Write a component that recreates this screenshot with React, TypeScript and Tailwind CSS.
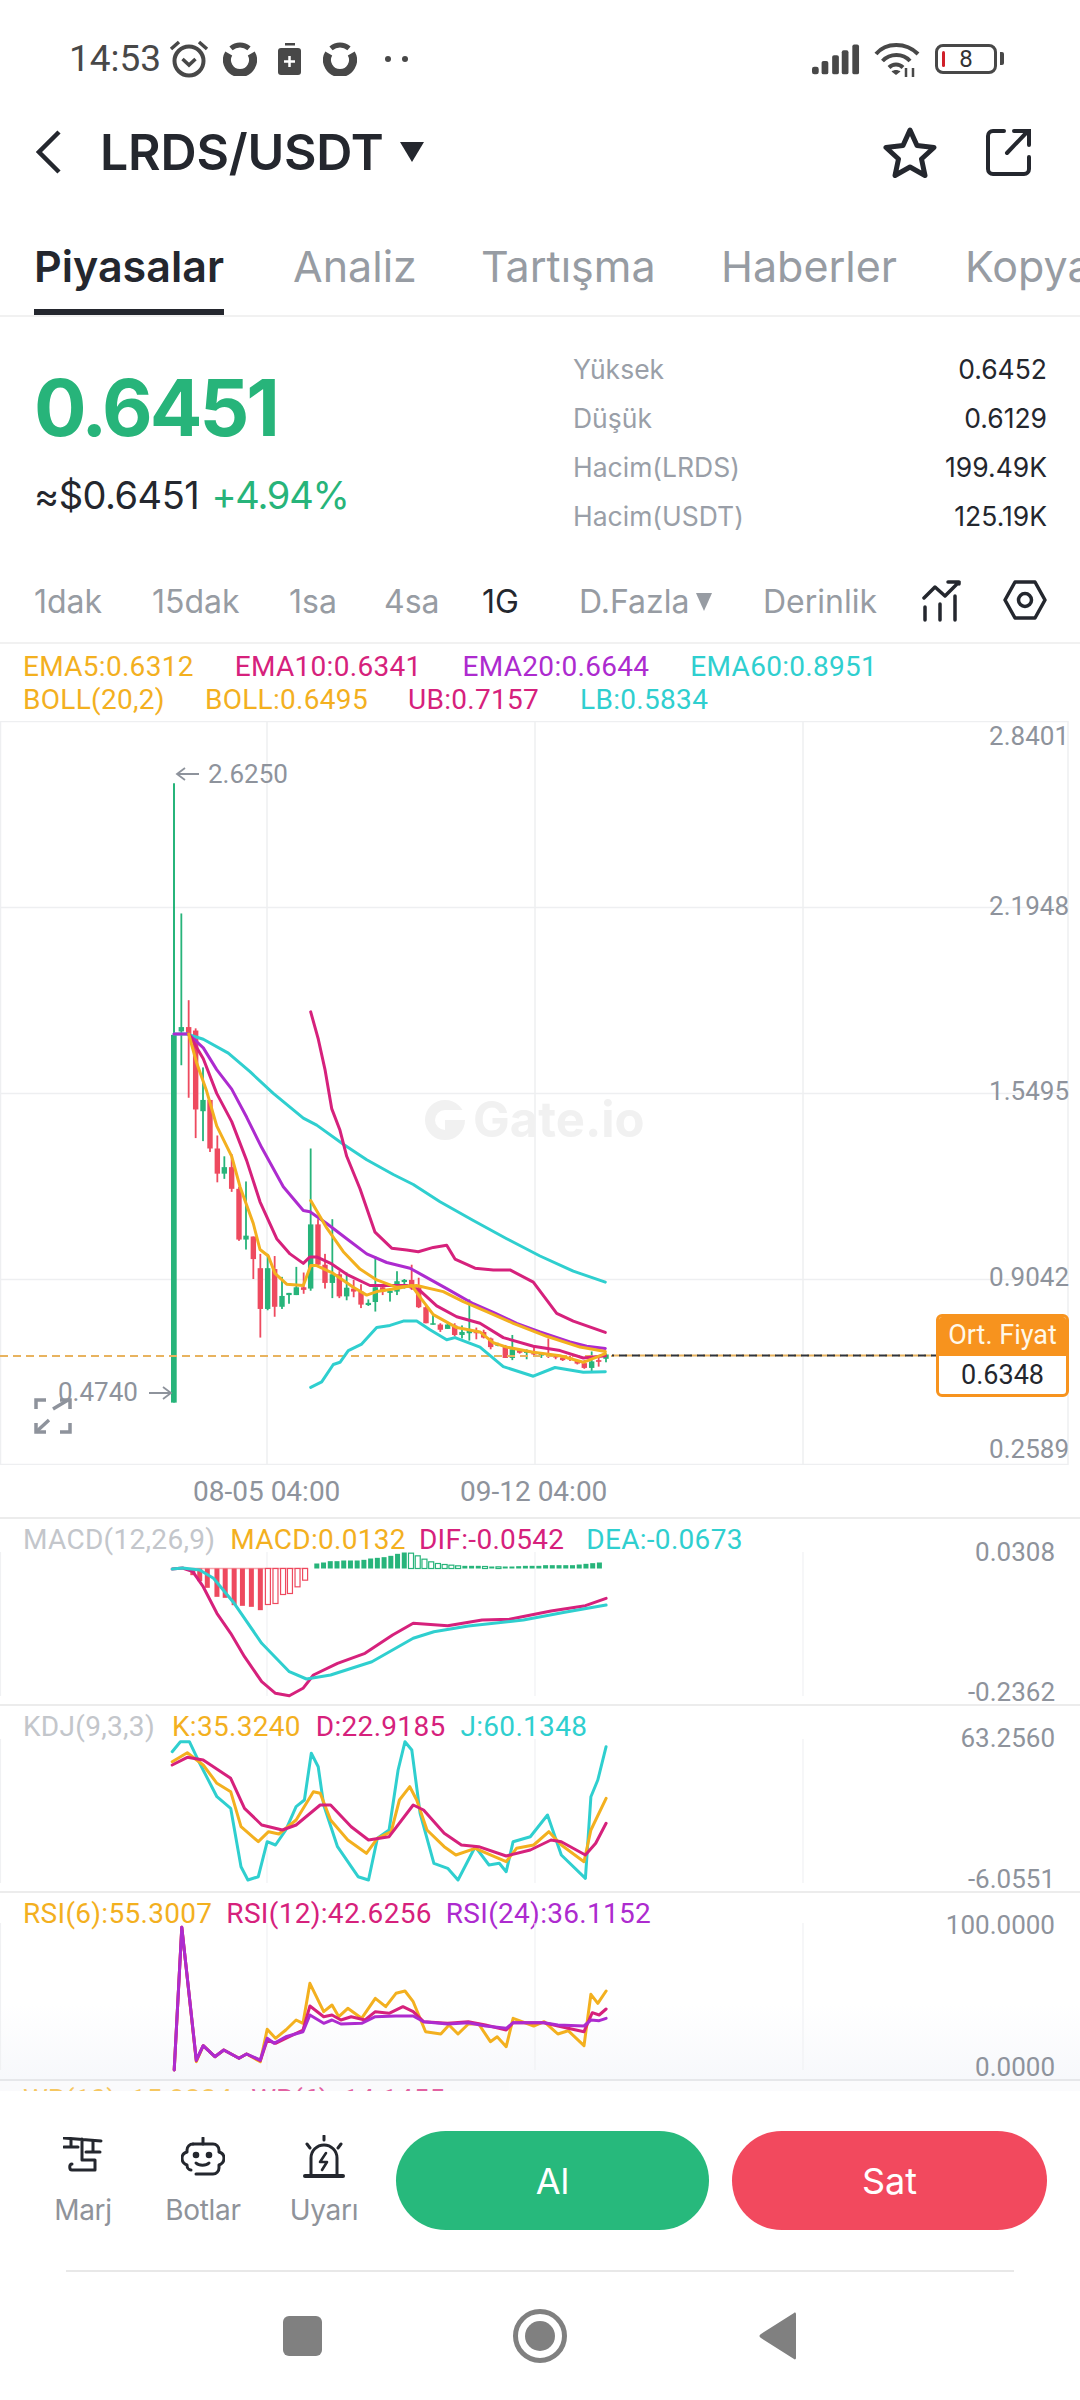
import React from 'react';

type Pt = [number, number];

const GREEN = '#27b47a';
const RED = '#ee4a5f';
const ORANGE = '#f3b01f';
const PINK = '#d6217c';
const PURPLE = '#ad2bcf';
const TEAL = '#2fcfcf';

// chart data was read off the reference, main chart uses x / 3 and y / 2.306 units
const mainX = (x: number) => 140 + x / 3;
const mainY = (y: number) => 19 + y / 2.306;
const toMain = (pts: Pt[]) => pts.map(([x, y]) => `${mainX(x).toFixed(1)},${mainY(y).toFixed(1)}`).join(' ');

const candles: [number, number, number, number, number, 'g' | 'r'][] = [
  [124, 400, 750, 662, 672, 'g'], [146, 600, 825, 662, 680, 'r'], [167, 665, 918, 670, 852, 'r'],
  [189, 755, 925, 830, 856, 'g'], [210, 830, 950, 830, 942, 'r'], [232, 912, 1020, 942, 1000, 'r'],
  [253, 960, 1012, 985, 1000, 'g'], [275, 955, 1042, 985, 1035, 'r'], [297, 1030, 1155, 1035, 1152, 'r'],
  [318, 1018, 1175, 1143, 1152, 'g'], [340, 1145, 1243, 1145, 1197, 'r'], [361, 1185, 1378, 1218, 1312, 'r'],
  [383, 1185, 1315, 1218, 1312, 'g'], [404, 1190, 1330, 1220, 1307, 'r'], [426, 1238, 1312, 1282, 1307, 'g'],
  [447, 1275, 1300, 1275, 1280, 'g'], [469, 1215, 1280, 1262, 1280, 'g'], [491, 1228, 1277, 1262, 1268, 'r'],
  [512, 942, 1270, 1117, 1265, 'g'], [534, 1105, 1210, 1117, 1210, 'r'], [555, 1185, 1265, 1210, 1252, 'r'],
  [577, 1105, 1287, 1232, 1252, 'g'], [598, 1225, 1287, 1232, 1283, 'r'], [620, 1228, 1292, 1263, 1283, 'g'],
  [641, 1245, 1285, 1265, 1272, 'r'], [663, 1255, 1310, 1272, 1302, 'r'], [685, 1290, 1305, 1298, 1303, 'g'],
  [706, 1190, 1318, 1262, 1296, 'g'], [728, 1258, 1280, 1262, 1272, 'r'], [750, 1265, 1295, 1270, 1275, 'g'],
  [771, 1225, 1280, 1248, 1272, 'g'], [793, 1243, 1265, 1245, 1250, 'g'], [815, 1210, 1268, 1245, 1262, 'r'],
  [836, 1240, 1310, 1262, 1308, 'r'], [858, 1305, 1345, 1308, 1345, 'r'], [879, 1325, 1348, 1345, 1348, 'g'],
  [901, 1345, 1365, 1348, 1360, 'r'], [923, 1342, 1358, 1348, 1358, 'g'], [944, 1345, 1375, 1350, 1372, 'r'],
  [966, 1350, 1380, 1365, 1372, 'g'], [988, 1290, 1385, 1362, 1368, 'g'], [1009, 1355, 1382, 1362, 1368, 'r'],
  [1031, 1360, 1380, 1365, 1378, 'r'], [1052, 1378, 1405, 1380, 1400, 'r'], [1074, 1390, 1398, 1393, 1397, 'g'],
  [1096, 1395, 1425, 1397, 1425, 'r'], [1117, 1372, 1430, 1405, 1425, 'g'], [1139, 1405, 1415, 1407, 1413, 'r'],
  [1160, 1405, 1428, 1410, 1413, 'g'], [1182, 1400, 1420, 1412, 1417, 'r'], [1204, 1415, 1425, 1416, 1419, 'g'],
  [1225, 1380, 1425, 1415, 1418, 'r'], [1247, 1418, 1428, 1420, 1424, 'r'], [1268, 1422, 1432, 1424, 1430, 'r'],
  [1290, 1420, 1432, 1424, 1428, 'r'], [1312, 1430, 1440, 1432, 1438, 'r'], [1333, 1430, 1450, 1437, 1448, 'r'],
  [1355, 1410, 1455, 1433, 1448, 'g'], [1376, 1425, 1445, 1430, 1434, 'r'], [1398, 1415, 1435, 1417, 1427, 'g'],
];

const ema60: Pt[] = [[102, 678], [140, 678], [190, 690], [265, 722], [330, 765], [400, 815], [490, 872], [530, 888], [610, 932], [680, 968], [760, 1002], [820, 1025], [900, 1065], [1000, 1108], [1100, 1150], [1200, 1190], [1300, 1225], [1396, 1250]];
const ema20: Pt[] = [[102, 678], [145, 678], [190, 710], [230, 760], [275, 805], [320, 870], [365, 940], [430, 1030], [490, 1085], [510, 1088], [560, 1115], [620, 1150], [680, 1185], [740, 1205], [810, 1218], [850, 1235], [920, 1265], [1000, 1300], [1060, 1320], [1130, 1345], [1200, 1365], [1290, 1388], [1340, 1398], [1396, 1403]];
const ema10: Pt[] = [[146, 678], [190, 735], [230, 815], [275, 880], [320, 970], [360, 1065], [410, 1150], [450, 1185], [490, 1207], [510, 1192], [530, 1192], [575, 1208], [620, 1232], [690, 1258], [740, 1258], [800, 1258], [840, 1270], [890, 1305], [950, 1330], [1020, 1345], [1090, 1378], [1180, 1398], [1260, 1408], [1330, 1425], [1396, 1420]];
const ema5: Pt[] = [[146, 678], [170, 745], [200, 810], [230, 890], [275, 960], [300, 1030], [340, 1115], [360, 1175], [385, 1190], [405, 1230], [440, 1255], [490, 1258], [512, 1212], [530, 1212], [580, 1230], [640, 1262], [680, 1280], [710, 1272], [770, 1265], [815, 1258], [845, 1290], [880, 1325], [950, 1355], [1020, 1365], [1060, 1390], [1100, 1400], [1180, 1412], [1260, 1420], [1330, 1435], [1396, 1415]];
const bollMid: Pt[] = [[512, 1062], [560, 1125], [610, 1180], [660, 1220], [710, 1245], [770, 1262], [830, 1258], [910, 1272], [970, 1295], [1040, 1318], [1120, 1345], [1220, 1375], [1320, 1400], [1396, 1410]];
const bollUp: Pt[] = [[512, 627], [535, 690], [555, 760], [575, 850], [600, 900], [620, 960], [660, 1035], [705, 1135], [755, 1172], [800, 1176], [835, 1180], [880, 1170], [920, 1165], [945, 1197], [1005, 1218], [1060, 1222], [1110, 1222], [1180, 1250], [1250, 1322], [1300, 1340], [1396, 1366]];
const bollLow: Pt[] = [[512, 1493], [545, 1480], [580, 1440], [600, 1435], [625, 1408], [665, 1393], [710, 1355], [750, 1350], [790, 1340], [830, 1340], [870, 1360], [920, 1383], [945, 1378], [1020, 1400], [1090, 1445], [1180, 1467], [1245, 1447], [1330, 1458], [1396, 1457]];

// lower panels: x / 1.452, y / 3, then relative to panel top
const HX = 1.452;
const toPanel = (pts: Pt[], offset: number) =>
  pts.map(([x, y]) => `${(x / HX).toFixed(1)},${(y / 3 + offset).toFixed(1)}`).join(' ');

const dif: Pt[] = [[250, 267], [265, 264], [280, 275], [295, 320], [315, 400], [335, 460], [355, 530], [380, 605], [400, 640], [420, 647], [440, 625], [455, 585], [490, 550], [530, 520], [570, 465], [600, 430], [650, 437], [700, 420], [740, 418], [800, 393], [850, 377], [880, 355]];
const dea: Pt[] = [[250, 267], [265, 264], [290, 270], [310, 295], [340, 370], [380, 490], [420, 575], [445, 597], [480, 585], [540, 545], [600, 475], [630, 455], [680, 438], [760, 420], [820, 397], [880, 375]];
const redBars: [number, number, boolean][] = [[280, 20, true], [290, 38, true], [301, 58, true], [315, 85, true], [327, 88, true], [340, 110, true], [352, 112, true], [365, 115, true], [378, 125, true], [389, 108, false], [400, 105, false], [411, 78, false], [421, 75, false], [432, 55, false], [443, 35, false]];
const greenHeights = [15, 18, 22, 22, 24, 24, 24, 26, 30, 32, 34, 38, 44, 48, 46, 38, 28, 20, 15, 12, 10, 8, 8, 8, 8, 6, 6, 5, 6, 6, 7, 8, 8, 8, 10, 10, 10, 10, 10, 12, 14, 16, 18];

const kdjJ: Pt[] = [[250, 815], [262, 785], [275, 785], [290, 850], [315, 950], [335, 985], [350, 1160], [360, 1200], [375, 1190], [388, 1085], [400, 1095], [415, 1050], [430, 980], [442, 960], [452, 820], [462, 860], [470, 975], [490, 1100], [520, 1190], [535, 1200], [548, 1075], [565, 1050], [578, 870], [588, 785], [598, 810], [610, 1000], [630, 1150], [650, 1165], [665, 1200], [690, 1100], [710, 1155], [725, 1150], [735, 1175], [745, 1085], [770, 1070], [795, 1005], [815, 1125], [850, 1195], [858, 950], [868, 900], [880, 800]];
const kdjK: Pt[] = [[250, 845], [272, 818], [295, 855], [315, 910], [335, 935], [350, 1040], [375, 1085], [390, 1055], [405, 1062], [430, 1020], [455, 935], [465, 940], [480, 1020], [505, 1080], [532, 1120], [548, 1075], [568, 1055], [580, 960], [595, 920], [605, 960], [620, 1050], [645, 1100], [662, 1125], [690, 1105], [735, 1145], [750, 1105], [775, 1095], [797, 1055], [815, 1095], [848, 1145], [858, 1050], [880, 955]];
const kdjD: Pt[] = [[250, 855], [272, 832], [295, 840], [335, 895], [355, 985], [380, 1035], [410, 1050], [430, 1035], [465, 975], [480, 975], [510, 1040], [535, 1080], [565, 1070], [600, 975], [615, 990], [645, 1060], [670, 1095], [695, 1100], [735, 1128], [770, 1110], [800, 1080], [815, 1085], [850, 1125], [865, 1090], [880, 1030]];

const rsi24: Pt[] = [[253, 570], [264, 142], [285, 540], [295, 497], [312, 530], [325, 510], [347, 535], [358, 522], [378, 540], [388, 475], [398, 490], [415, 470], [440, 455], [450, 405], [470, 430], [482, 420], [495, 432], [525, 430], [545, 410], [575, 408], [600, 408], [615, 425], [650, 432], [680, 428], [705, 438], [735, 445], [745, 428], [790, 428], [810, 435], [848, 438], [858, 420], [870, 422], [880, 415]];
const rsi12: Pt[] = [[253, 570], [264, 142], [285, 542], [295, 497], [312, 530], [325, 510], [347, 535], [358, 522], [378, 542], [388, 480], [400, 490], [440, 450], [450, 378], [470, 410], [482, 405], [495, 420], [510, 410], [530, 420], [545, 395], [565, 400], [585, 380], [600, 395], [615, 425], [650, 430], [680, 425], [705, 435], [735, 450], [745, 428], [790, 428], [810, 438], [848, 455], [860, 398], [870, 405], [880, 387]];
const rsi6: Pt[] = [[253, 570], [264, 142], [285, 545], [295, 497], [312, 530], [325, 510], [347, 535], [358, 522], [378, 545], [388, 448], [400, 475], [415, 450], [430, 420], [440, 430], [450, 310], [470, 395], [482, 375], [492, 410], [505, 385], [525, 415], [545, 355], [560, 380], [575, 340], [588, 333], [600, 365], [618, 455], [640, 462], [652, 435], [665, 462], [680, 432], [695, 432], [712, 485], [722, 470], [735, 500], [745, 415], [775, 438], [790, 425], [810, 462], [825, 452], [848, 497], [858, 343], [868, 370], [880, 333]];

const Line = ({ points, color, width = 3 }: { points: string; color: string; width?: number }) => (
  <polyline points={points} fill="none" stroke={color} strokeWidth={width} strokeLinejoin="round" strokeLinecap="round" />
);

const RingIcon = () => (
  <svg width="34" height="34" viewBox="0 0 34 34" fill="none" stroke="#484848">
    <path d="M5.740 11.500A13 13 0 1 0 28.260 11.500" strokeWidth="8" />
    <path d="M8 6.300A14 14 0 0 1 26 6.300" strokeWidth="5" />
  </svg>
);

const StatusBar = () => (
  <div className="h-[117px] pl-[69px] pr-[76px] flex items-center justify-between text-[#484848]">
    <div className="flex items-center">
      <span className="text-[37px] leading-none w-[98px] font-['Roboto',sans-serif]">14:53</span>
      <svg width="44" height="40" viewBox="0 0 44 40" fill="none" stroke="#484848">
        <circle cx="22" cy="22" r="14.500" strokeWidth="4" />
        <path d="M15.500 20l6.500 6 6.500-6" strokeWidth="3.500" />
        <path d="M4 10l8-7M40 10l-8-7" strokeWidth="3.500" />
      </svg>
      <div className="ml-[12px]"><RingIcon /></div>
      <svg className="ml-[21px]" width="24" height="32" viewBox="0 0 24 32">
        <rect x="7" y="0" width="10" height="2.500" fill="#484848" />
        <rect x="0" y="5" width="23" height="27" rx="3" fill="#484848" />
        <path d="M11.500 13v11M6 18.500h11" stroke="#fff" strokeWidth="2.500" />
      </svg>
      <div className="ml-[21px]"><RingIcon /></div>
      <div className="ml-[28px] flex gap-[11px]">
        <span className="w-[6px] h-[6px] rounded-full bg-[#484848]" />
        <span className="w-[6px] h-[6px] rounded-full bg-[#484848]" />
      </div>
    </div>
    <div className="flex items-center">
      <svg width="48" height="32" viewBox="0 0 50 32" fill="#484848">
        <rect x="0" y="24" width="7" height="8" rx="2.500" />
        <rect x="10" y="18" width="7" height="14" rx="2" />
        <rect x="21" y="12" width="7" height="20" rx="2" />
        <rect x="31" y="7" width="7" height="25" rx="2" />
        <rect x="42" y="1" width="7" height="31" rx="2" />
      </svg>
      <svg className="ml-[14px]" width="46" height="36" viewBox="0 0 46 36" fill="none" stroke="#484848" strokeWidth="4">
        <path d="M2 13C12 1 32 1 44 13" />
        <path d="M8.500 20C16 12 29 12 36 20" />
        <path d="M15 26.500C19 22.500 25 22.500 29 26.500" />
        <path d="M22 34l-4.500-3.500C20 28.500 24 28.500 26.500 30.500Z" fill="#484848" stroke="none" />
        <path d="M32 27v9M39 27v9" strokeWidth="2.500" />
      </svg>
      <div className="ml-[15px] relative w-[62px] h-[30px] rounded-[8px] border-[3px] border-[#484848] flex items-center justify-center">
        <span className="absolute left-[4px] top-[4px] w-[3px] h-[16px] bg-[#d0202a] rounded-[2px]" />
        <span className="text-[24px] leading-none text-[#333] font-['Roboto',sans-serif]">8</span>
      </div>
      <span className="ml-[3px] w-[4px] h-[13px] bg-[#484848] rounded-r-[2px]" />
    </div>
  </div>
);

const Header = () => (
  <div className="h-[70px] relative flex items-center pl-[36px] pr-[49px]">
    <svg width="26" height="44" viewBox="0 0 26 44" fill="none" stroke="#24272e" strokeWidth="4.500">
      <path d="M23 2L3 22l20 20" />
    </svg>
    <span className="ml-[38px] text-[50px] leading-none font-semibold text-[#24272e] font-['Inter',sans-serif] tracking-[-0.200px]">LRDS/USDT</span>
    <svg className="ml-[16px]" width="24" height="20" viewBox="0 0 24 20"><path d="M0 0h24L12 20Z" fill="#24272e" /></svg>
    <div className="ml-auto flex items-center gap-[48px]">
      <svg width="54" height="52" viewBox="0 0 54 52" fill="none" stroke="#24272e" strokeWidth="5" strokeLinejoin="round">
        <path d="M27 4l7 15.500 17 2-12.500 11.500 3.500 16.500L27 41l-15 8.500 3.500-16.500L3 21.500l17-2Z" />
      </svg>
      <svg width="46" height="48" viewBox="0 0 46 48" fill="none" stroke="#24272e" strokeWidth="4" strokeLinecap="round">
        <path d="M19 3H8a5 5 0 0 0-5 5v33a5 5 0 0 0 5 5h31a5 5 0 0 0 5-5V29" />
        <path d="M22 25L42 4M29 3h15v14" />
      </svg>
    </div>
  </div>
);

const Tabs = () => (
  <div className="h-[130px] pt-[54px] border-b-2 border-[#f1f1f1] overflow-hidden relative">
    <div className="flex text-[43px] leading-[50px] font-['Inter',sans-serif] whitespace-nowrap text-[#979ca3]">
      <div className="ml-[34px] w-[259px] shrink-0 text-[#24272e] font-semibold">Piyasalar</div>
      <div className="w-[188px] shrink-0">Analiz</div>
      <div className="w-[240px] shrink-0">Tartışma</div>
      <div className="w-[244px] shrink-0">Haberler</div>
      <div className="shrink-0">Kopya</div>
    </div>
    <div className="absolute left-[34px] bottom-0 w-[190px] h-[6px] bg-[#24272e]" />
  </div>
);

const stats = [
  ['Yüksek', '0.6452'],
  ['Düşük', '0.6129'],
  ['Hacim(LRDS)', '199.49K'],
  ['Hacim(USDT)', '125.19K'],
];

const PriceBlock = () => (
  <div className="h-[196px] pl-[34px] pr-[33px] flex font-['Inter',sans-serif]">
    <div className="w-[539px]">
      <div className="mt-[44px] text-[78px] leading-[94px] font-bold text-[#27b47a] tracking-[-3px]">0.6451</div>
      <div className="mt-[18px] text-[38px] leading-[44px] text-[#24272e] tracking-[-0.500px]">
        ≈$0.6451 <span className="text-[#27b47a] ml-[2px] tracking-[-1.200px]">+4.94%</span>
      </div>
    </div>
    <div className="flex-1 pt-[28px]">
      {stats.map(([label, value]) => (
        <div key={label} className="h-[49px] flex items-center justify-between text-[26.500px]">
          <span className="text-[#9a9fa8]">{label}</span>
          <span className="text-[#24272e]">{value}</span>
        </div>
      ))}
    </div>
  </div>
);

const TimeRow = () => (
  <div className="h-[131px] border-b-2 border-[#f1f1f1] pl-[34px] pt-[67px] flex text-[32px] leading-[44px] text-[#979ca3] font-['Inter',sans-serif] whitespace-nowrap">
    <div className="w-[118px]">1dak</div>
    <div className="w-[137px]">15dak</div>
    <div className="w-[95px]">1sa</div>
    <div className="w-[98px]">4sa</div>
    <div className="w-[97px] text-[#24272e]">1G</div>
    <div className="w-[184px] h-[44px] flex items-center">
      D.Fazla
      <svg className="ml-[7px]" width="16" height="18" viewBox="0 0 16 18"><path d="M0 0h16L8 18Z" fill="#979ca3" /></svg>
    </div>
    <div className="w-[159px]">Derinlik</div>
    <svg width="40" height="42" viewBox="0 0 40 42" fill="none" stroke="#24272e" strokeWidth="3.500" strokeLinecap="round" strokeLinejoin="round">
      <path d="M2 18l11-11 10 9L37 2M26 2h11v2" />
      <path d="M3 27v13M18 24v16M33 16v24" />
    </svg>
    <svg width="44" height="40" viewBox="0 0 44 40" fill="none" stroke="#24272e" strokeWidth="3.500" strokeLinejoin="round" className="ml-[41px]">
      <path d="M12 2h20l10 18-10 18H12L2 20Z" />
      <circle cx="22" cy="20" r="6.500" />
    </svg>
  </div>
);

const Legend = ({ items, h = 'h-[33px]' }: { items: [string, string, string][]; h?: string }) => (
  <div className={`${h} flex items-center pl-[23px] text-[28px] leading-none tracking-[0.300px] whitespace-nowrap font-['Roboto',sans-serif]`}>
    {items.map(([text, color, ml]) => (
      <span key={text} className={ml} style={{ color }}>{text}</span>
    ))}
  </div>
);

const AxisLabel = ({ top, right = 'right-[11px]', children }: { top: number; right?: string; children: React.ReactNode }) => (
  <span className={`absolute ${right} text-[26px] leading-[26px] text-[#8e939c] font-['Roboto',sans-serif]`} style={{ top: top - 13 }}>
    {children}
  </span>
);

const MainChart = () => (
  <div className="relative h-[798px] border-b-2 border-[#ececec] overflow-hidden">
    <svg width="1080" height="744" className="absolute left-0 top-0">
      {[0, 186, 372, 558, 743].map((y) => <line key={y} x1="0" x2="1068" y1={y + 0.5} y2={y + 0.5} stroke="#eeeff1" strokeWidth="1.500" />)}
      {[0.5, 267, 535, 803, 1068].map((x) => <line key={x} x1={x} x2={x} y1="0" y2="744" stroke="#eeeff1" strokeWidth="1.500" />)}
      <line x1={mainX(102)} x2={mainX(102)} y1={mainY(100)} y2={mainY(1528)} stroke={GREEN} strokeWidth="2" />
      <rect x={mainX(93)} y={mainY(680)} width="5.700" height={(1528 - 680) / 2.306} fill={GREEN} />
      {candles.map(([x, wt, wb, bt, bb, c]) => (
        <g key={x} fill={c === 'g' ? GREEN : RED} stroke="none">
          <rect x={mainX(x) - 0.9} y={mainY(wt)} width="1.800" height={(wb - wt) / 2.306} />
          <rect x={mainX(x) - 2.700} y={mainY(bt)} width="5.400" height={Math.max((bb - bt) / 2.306, 1.500)} />
        </g>
      ))}
      <line x1="0" x2="612" y1="635" y2="635" stroke="#e8b35f" strokeWidth="2" strokeDasharray="8 5" />
      <line x1="612" x2="936" y1="634.500" y2="634.500" stroke="#e8b35f" strokeWidth="2" strokeDasharray="8 5" />
      <line x1="612" x2="936" y1="634.500" y2="634.500" stroke="#30343a" strokeWidth="2" strokeDasharray="8 5" strokeDashoffset="6" />
      <Line points={toMain(ema60)} color={TEAL} />
      <Line points={toMain(bollUp)} color={PINK} />
      <Line points={toMain(bollLow)} color={TEAL} />
      <Line points={toMain(ema20)} color={PURPLE} />
      <Line points={toMain(ema10)} color={PINK} />
      <Line points={toMain(bollMid)} color={ORANGE} />
      <Line points={toMain(ema5)} color={ORANGE} />
      <path d="M199 53h-22m8-6l-8 6 8 6M149 672h22m-8-6l8 6-8 6" fill="none" stroke="#8e939c" strokeWidth="1.800" />
      <g fill="none" stroke="#8e939c" strokeWidth="3.500">
        <path d="M36 688v-9h10M70 688v-9h-10M36 702v9h10M70 702v9h-10" />
        <path d="M53 688l15-9M36 711l13-12" />
      </g>
      <g>
        <circle cx="445" cy="399" r="15" fill="none" stroke="#f1f1f1" strokeWidth="10" />
        <rect x="445" y="389" width="20" height="10" fill="#fff" />
        <rect x="445" y="399" width="10" height="10" fill="#f1f1f1" />
      </g>
    </svg>
    <span className="absolute left-[473px] top-[372px] text-[49px] leading-[54px] font-bold text-[#f1f1f1] font-['Inter',sans-serif]">Gate.io</span>
    <span className="absolute left-[208px] top-[38px] text-[26px] leading-[30px] text-[#8e939c] font-['Roboto',sans-serif]">2.6250</span>
    <span className="absolute left-[58px] top-[656px] text-[26px] leading-[30px] text-[#8e939c] font-['Roboto',sans-serif]">0.4740</span>
    <AxisLabel top={15}>2.8401</AxisLabel>
    <AxisLabel top={185}>2.1948</AxisLabel>
    <AxisLabel top={370}>1.5495</AxisLabel>
    <AxisLabel top={556}>0.9042</AxisLabel>
    <AxisLabel top={728}>0.2589</AxisLabel>
    <div className="absolute left-[936px] top-[593px] w-[133px] h-[83px] rounded-[6px] border-[3px] border-[#f7931e] bg-white overflow-hidden font-['Roboto',sans-serif] text-[27px]">
      <div className="h-[39px] bg-[#f7931e] text-[#fff8e8] text-center leading-[36px]">Ort. Fiyat</div>
      <div className="text-[#24272e] text-center leading-[38px]">0.6348</div>
    </div>
    <span className="absolute left-[193px] top-[756px] text-[28px] leading-[30px] text-[#8e939c] font-['Roboto',sans-serif]">08-05 04:00</span>
    <span className="absolute left-[460px] top-[756px] text-[28px] leading-[30px] text-[#8e939c] font-['Roboto',sans-serif]">09-12 04:00</span>
  </div>
);

const PanelGrid = ({ top = 33 }: { top?: number }) => (
  <>
    {[0.5, 267, 535, 803].map((x) => <line key={x} x1={x} x2={x} y1={top} y2="177" stroke="#f0f1f3" strokeWidth="1.200" />)}
  </>
);

const PANEL_RIGHT = 'right-[25px]';

const MacdPanel = () => (
  <div className="relative h-[187px] border-b-2 border-[#ececec] overflow-hidden">
    <Legend items={[['MACD(12,26,9)', '#c3c6cb', ''], ['MACD:0.0132', ORANGE, 'ml-[15px]'], ['DIF:-0.0542', PINK, 'ml-[13px]'], ['DEA:-0.0673', TEAL, 'ml-[22px]']]} h="h-[42px]" />
    <svg width="1080" height="187" className="absolute left-0 top-0">
      <PanelGrid />
      <line x1="172" x2="308" y1="49.500" y2="49.500" stroke="#f5a5ad" strokeWidth="1.500" />
      {redBars.map(([x, d, solid]) => (
        <rect key={x} x={x / HX - 2.500} y="49.500" width="5" height={d / 3} fill={solid ? RED : '#fff'} stroke={RED} strokeWidth={solid ? 0 : 1.200} />
      ))}
      {greenHeights.map((d, i) => {
        const hollow = i > 0 && d < greenHeights[i - 1];
        return <rect key={i} x={(460 + i * 9.770) / HX - 2.500} y={49.500 - d / 3} width="5" height={d / 3} fill={hollow ? '#fff' : GREEN} stroke={GREEN} strokeWidth={hollow ? 1.200 : 0} />;
      })}
      <Line points={toPanel(dif, -39)} color={PINK} />
      <Line points={toPanel(dea, -39)} color={TEAL} />
    </svg>
    <AxisLabel top={33} right={PANEL_RIGHT}>0.0308</AxisLabel>
    <AxisLabel top={173} right={PANEL_RIGHT}>-0.2362</AxisLabel>
  </div>
);

const KdjPanel = () => (
  <div className="relative h-[187px] border-b-2 border-[#ececec] overflow-hidden">
    <Legend items={[['KDJ(9,3,3)', '#c3c6cb', ''], ['K:35.3240', ORANGE, 'ml-[17px]'], ['D:22.9185', PINK, 'ml-[15px]'], ['J:60.1348', TEAL, 'ml-[15px]']]} h="h-[42px]" />
    <svg width="1080" height="187" className="absolute left-0 top-0">
      <PanelGrid />
      <Line points={toPanel(kdjJ, -226)} color={TEAL} />
      <Line points={toPanel(kdjK, -226)} color={ORANGE} />
      <Line points={toPanel(kdjD, -226)} color={PINK} />
    </svg>
    <AxisLabel top={32} right={PANEL_RIGHT}>63.2560</AxisLabel>
    <AxisLabel top={173} right={PANEL_RIGHT}>-6.0551</AxisLabel>
  </div>
);

const RsiPanel = () => (
  <div className="relative h-[188px] border-b-2 border-[#e6e7ea] overflow-hidden bg-gradient-to-b from-white from-60% to-[#f7f8fb]">
    <Legend items={[['RSI(6):55.3007', ORANGE, ''], ['RSI(12):42.6256', PINK, 'ml-[14px]'], ['RSI(24):36.1152', PURPLE, 'ml-[14px]']]} h="h-[42px]" />
    <svg width="1080" height="187" className="absolute left-0 top-0">
      <PanelGrid top={30} />
      <Line points={toPanel(rsi6, -13)} color={ORANGE} />
      <Line points={toPanel(rsi12, -13)} color={PINK} />
      <Line points={toPanel(rsi24, -13)} color={PURPLE} />
    </svg>
    <AxisLabel top={32} right={PANEL_RIGHT}>100.0000</AxisLabel>
    <AxisLabel top={174} right={PANEL_RIGHT}>0.0000</AxisLabel>
  </div>
);

// next indicator panel, only a sliver of its legend shows above the bottom bar
const ClippedPanel = () => (
  <div className="h-[10px] overflow-hidden bg-[#f9f9fc] opacity-70">
    <div className="mt-[2px] flex items-center pl-[23px] h-[33px] text-[28px] leading-none whitespace-nowrap font-['Roboto',sans-serif]">
      <span style={{ color: ORANGE }}>WR(10):-15.9234</span>
      <span className="ml-[19px]" style={{ color: PINK }}>WR(6):-14.1455</span>
    </div>
  </div>
);

const MarjIcon = () => (
  <svg width="40" height="40" viewBox="0 0 40 40" fill="none" stroke="#24272e" strokeWidth="3" strokeLinecap="round" strokeLinejoin="round">
    <path d="M1 1l37 3M19 2v21h13v10H9c-3 0-3-6 0-6" />
    <path d="M8 2v8M1 10h14M30 4v11M23 15h14" />
  </svg>
);

const BotIcon = () => (
  <svg width="44" height="40" viewBox="0 0 44 40" fill="none" stroke="#24272e" strokeWidth="3" strokeLinecap="round" strokeLinejoin="round">
    <path d="M22 1v6" />
    <path d="M12 7h20a6 6 0 0 1 6 6v2c3 1 5 3 5 6s-2 6-5 7v3a6 6 0 0 1-6 6H15" />
    <path d="M12 7a6 6 0 0 0-6 6v2c-3 1-5 3-5 6s2 6 5 7c0 3 2 5 4 5" />
    <circle cx="15" cy="18" r="1.800" fill="#24272e" />
    <circle cx="28" cy="18" r="1.800" fill="#24272e" />
    <path d="M15 26c3 3 10 3 13 0" />
  </svg>
);

const AlertIcon = () => (
  <svg width="42" height="44" viewBox="0 0 42 44" fill="none" stroke="#24272e" strokeWidth="3" strokeLinecap="round" strokeLinejoin="round">
    <path d="M21 1v4M4 9l3 4M38 9l-3 4" />
    <path d="M8 41V23a13 13 0 0 1 26 0v18" />
    <path d="M2 41h38" strokeWidth="4" />
    <path d="M23 18l-6 9h7l-5 8" strokeWidth="2.600" />
  </svg>
);

const BottomBar = () => (
  <div className="h-[179px] bg-white flex pl-[33px] pr-[33px] font-['Inter',sans-serif]">
    <div className="w-[363px] flex pt-[44px]">
      {[
        { label: 'Marj', icon: <MarjIcon />, w: 'w-[100px]' },
        { label: 'Botlar', icon: <BotIcon />, w: 'w-[140px]' },
        { label: 'Uyarı', icon: <AlertIcon />, w: 'w-[102px]' },
      ].map((b) => (
        <div key={b.label} className={`${b.w} flex flex-col items-center`}>
          <div className="h-[44px] flex items-center">{b.icon}</div>
          <span className="mt-[15px] text-[28px] leading-[32px] text-[#8f939a] tracking-[-0.300px]">{b.label}</span>
        </div>
      ))}
    </div>
    <div className="flex gap-[23px] pt-[40px] text-[36px] text-white">
      <div className="w-[313px] h-[99px] rounded-full bg-[#27b97c] flex items-center justify-center">Al</div>
      <div className="w-[315px] h-[99px] rounded-full bg-[#f2495e] flex items-center justify-center">Sat</div>
    </div>
  </div>
);

const NavBar = () => (
  <div className="mx-[66px] h-[130px] border-t-2 border-[#e8e8e8] relative flex items-center">
    <div className="ml-[217px] mt-[-1px] w-[39px] h-[40px] rounded-[6px] bg-[#808080]" />
    <div className="ml-[191px] w-[54px] h-[54px] rounded-full border-[5px] border-[#808080] flex items-center justify-center">
      <div className="w-[30px] h-[30px] rounded-full bg-[#808080]" />
    </div>
    <svg className="ml-[192px]" width="38" height="48" viewBox="0 0 38 48"><path d="M37 2v44c0 1-1 2-2 1L2 26c-2-1-2-3 0-4L35 1c1-1 2 0 2 1Z" fill="#808080" /></svg>
  </div>
);

export default function App() {
  return (
    <div className="w-[1080px] h-[2400px] bg-white overflow-hidden">
      <StatusBar />
      <Header />
      <Tabs />
      <PriceBlock />
      <TimeRow />
      <div className="pt-[6px] h-[77px]">
        <Legend items={[['EMA5:0.6312', ORANGE, ''], ['EMA10:0.6341', PINK, 'ml-[41px]'], ['EMA20:0.6644', PURPLE, 'ml-[41px]'], ['EMA60:0.8951', TEAL, 'ml-[41px]']]} />
        <Legend items={[['BOLL(20,2)', ORANGE, ''], ['BOLL:0.6495', ORANGE, 'ml-[40px]'], ['UB:0.7157', PINK, 'ml-[40px]'], ['LB:0.5834', TEAL, 'ml-[41px]']]} />
      </div>
      <MainChart />
      <MacdPanel />
      <KdjPanel />
      <RsiPanel />
      <ClippedPanel />
      <BottomBar />
      <NavBar />
    </div>
  );
}
